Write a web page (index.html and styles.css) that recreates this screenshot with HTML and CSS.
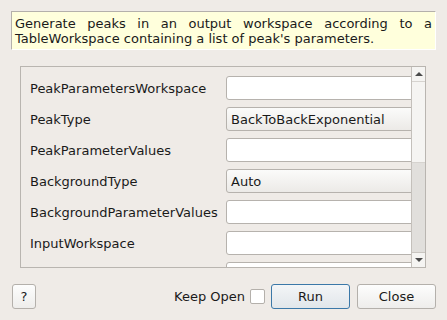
FILE: index.html
```html
<!DOCTYPE html>
<html lang="en">
<head>
    <meta charset="UTF-8">
    <title>GeneratePeaks</title>
    <link rel="stylesheet" href="styles.css">
</head>
<body>
    <div class="dialog">
        <!-- Algorithm description -->
        <div class="description">Generate peaks in an output workspace according to a TableWorkspace containing a list of peak's parameters.</div>

        <!-- Property list -->
        <div class="properties">
            <div class="viewport">
                <div class="form">
                    <label class="prop-label">PeakParametersWorkspace</label>
                    <div class="field"></div>
                    <label class="prop-label">PeakType</label>
                    <div class="field combo">BackToBackExponential</div>
                    <label class="prop-label">PeakParameterValues</label>
                    <div class="field"></div>
                    <label class="prop-label">BackgroundType</label>
                    <div class="field combo">Auto</div>
                    <label class="prop-label">BackgroundParameterValues</label>
                    <div class="field"></div>
                    <label class="prop-label">InputWorkspace</label>
                    <div class="field"></div>
                    <label class="prop-label"></label>
                    <div class="field"></div>
                </div>
            </div>
            <div class="scrollbar">
                <div class="scroll-btn"><span class="arrow-up"></span></div>
                <div class="track">
                    <div class="handle"></div>
                </div>
                <div class="scroll-btn"><span class="arrow-down"></span></div>
            </div>
        </div>

        <!-- Dialog buttons -->
        <div class="button-row">
            <button class="btn help-btn">?</button>
            <div class="spacer"></div>
            <span class="keep-open">Keep Open</span>
            <span class="checkbox"></span>
            <button class="btn run-btn">Run</button>
            <button class="btn">Close</button>
        </div>
    </div>
</body>
</html>
```

FILE: styles.css
```css
body {
    margin: 0;
    background-color: #efebe7;
    font-family: "DejaVu Sans", sans-serif;
    font-size: 13px;
    color: #1a1a1a;
    overflow: hidden;
}
.dialog {
    width: 447px;
    height: 320px;
    padding: 11px 11px 0 11px;
    box-sizing: border-box;
}
.description {
    width: 425px;
    height: 39px;
    box-sizing: border-box;
    background-color: #ffffdc;
    border-top: 1px solid #b4b0ab;
    border-left: 1px solid #b4b0ab;
    border-right: 1px solid #ffffff;
    border-bottom: 1px solid #ffffff;
    padding: 4px 3px 0 3px;
    line-height: 15px;
    text-align: justify;
}
.properties {
    display: flex;
    width: 406px;
    height: 202px;
    margin: 16px 0 0 9px;
    box-sizing: border-box;
    border: 1px solid #b9b5b0;
}
.viewport {
    flex: 1;
    overflow: hidden;
}
.form {
    display: grid;
    grid-template-columns: 190px 210px;
    grid-auto-rows: 24px;
    column-gap: 6px;
    row-gap: 7px;
    padding: 9px 0 0 9px;
}
.prop-label {
    display: flex;
    align-items: center;
    white-space: nowrap;
}
.field {
    background-color: #ffffff;
    border: 1px solid #b6b2ad;
    border-radius: 3px;
    box-sizing: border-box;
}
.field.combo {
    display: flex;
    align-items: center;
    padding-left: 4px;
    background: linear-gradient(#fbfbfa, #eceae7);
}
.scrollbar {
    width: 13px;
    border-left: 1px solid #c4c0bb;
    display: flex;
    flex-direction: column;
}
.scroll-btn {
    height: 14px;
    background-color: #f5f4f2;
    display: flex;
    justify-content: center;
    align-items: center;
}
.scroll-btn:first-child {
    border-bottom: 1px solid #d6d3cf;
}
.scroll-btn:last-child {
    border-top: 1px solid #c9c5c0;
}
.arrow-up, .arrow-down {
    width: 0;
    height: 0;
    border-left: 4px solid transparent;
    border-right: 4px solid transparent;
}
.arrow-up {
    border-bottom: 4px solid #4a4a4a;
}
.arrow-down {
    border-top: 4px solid #4a4a4a;
}
.track {
    flex: 1;
    background-color: #e1dfdc;
}
.handle {
    height: 80px;
    background-color: #f5f4f2;
    border-bottom: 1px solid #d6d3cf;
}
.button-row {
    display: flex;
    align-items: center;
    margin-top: 16px;
    width: 424px;
    padding-left: 1px;
}
.spacer {
    flex: 1;
}
.btn {
    height: 25px;
    width: 79px;
    font-family: "DejaVu Sans", sans-serif;
    font-size: 13px;
    color: #1a1a1a;
    background: linear-gradient(#fdfdfd, #eeedeb);
    border: 1px solid #b4b0ab;
    border-radius: 3px;
    padding: 0;
    margin-left: 7px;
}
.help-btn {
    width: 24px;
    margin-left: 0;
}
.run-btn {
    border-color: #3b78a8;
    background: linear-gradient(#f3f5f7, #e1e6ea);
}
.keep-open {
    margin-right: 5px;
}
.checkbox {
    width: 13px;
    height: 13px;
    background-color: #ffffff;
    border: 1px solid #b4b0ab;
    border-radius: 2px;
    margin-right: -1px;
}
```
